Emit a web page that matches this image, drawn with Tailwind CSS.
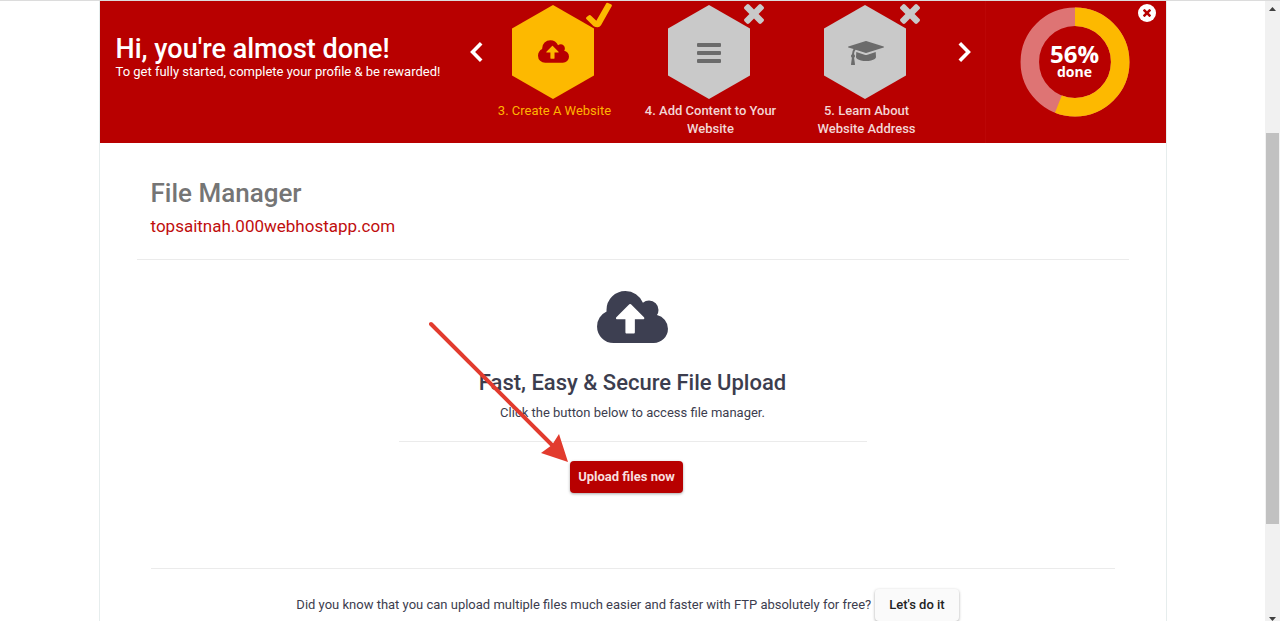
<!DOCTYPE html>
<html lang="en">
<head>
    <meta charset="UTF-8">
    <meta name="viewport" content="width=device-width, initial-scale=1.0">
    <title>File Manager</title>
    <script src="https://cdn.jsdelivr.net/npm/@tailwindcss/browser@4"></script>
</head>
<body class="bg-white font-['Roboto',sans-serif] text-[#3c3d4e]">
    <!-- shared icons -->
    <svg class="hidden" aria-hidden="true">
        <symbol id="cloud" viewBox="0 192 1920 1408">
            <path d="M1280 928q0-14-9-23l-352-352q-9-9-23-9t-23 9l-351 351q-10 12-10 24 0 14 9 23t23 9h224v352q0 13 9.500 22.500t22.500 9.500h192q13 0 22.500-9.500t9.500-22.500v-352h224q13 0 22.500-9.500t9.500-22.500zm640 288q0 159-112.500 271.500t-271.500 112.500h-1088q-185 0-316.500-131.500t-131.500-316.500q0-130 70-240t188-165q-2-30-2-43 0-212 150-362t362-150q156 0 285.500 87t188.500 231q71-62 166-62 106 0 181 75t75 181q0 76-41 138 130 31 213.500 135.500t83.500 238.500z"/>
        </symbol>
        <symbol id="times" viewBox="110 366 1188 1188">
            <path d="M1298 1322q0 40-28 68l-136 136q-28 28-68 28t-68-28l-294-294-294 294q-28 28-68 28t-68-28l-136-136q-28-28-28-68t28-68l294-294-294-294q-28-28-28-68t28-68l136-136q28-28 68-28t68 28l294 294 294-294q28-28 68-28t68 28l136 136q28 28 28 68t-28 68l-294 294 294 294q28 28 28 68z"/>
        </symbol>
        <symbol id="hexagon" viewBox="0 0 82 94">
            <path d="M41 0L82 23.500V70.500L41 94L0 70.500V23.500Z"/>
        </symbol>
    </svg>

    <div class="flex h-screen overflow-hidden border-t border-[#dcdcdc]">
        <div class="flex-1 min-w-0">
            <div class="max-w-[1068px] mx-auto min-h-screen border-x border-[#e6eded]">

                <!-- onboarding banner -->
                <header class="relative flex bg-[#b80000] text-white h-[142px]">
                    <div class="flex-1 pl-4 pt-[34px]">
                        <h1 class="text-[27px] leading-7 font-medium whitespace-nowrap">Hi, you're almost done!</h1>
                        <p class="text-[13px] leading-[18px] whitespace-nowrap">To get fully started, complete your profile &amp; be rewarded!</p>
                    </div>

                    <div class="flex items-start pt-1">
                        <button type="button" aria-label="Previous step" class="w-[18px] mt-[37px]">
                            <svg class="w-[13px] h-5" viewBox="0 0 13 20" fill="none" stroke="currentColor" stroke-width="3.600"><path d="M11.200 1.300L2.600 10L11.200 18.700"/></svg>
                        </button>
                        <ol class="flex gap-[22px] text-[13px] leading-[18px] font-medium text-center text-[#f3d5d5]">
                            <li class="w-[134px] text-[#ffb400] font-normal">
                                <div class="relative w-[82px] mx-auto -left-0.5">
                                    <svg class="w-[82px] h-[94px] fill-[#fdb900]"><use href="#hexagon"/></svg>
                                    <svg class="absolute top-[35px] left-[26px] w-[31px] h-[23px] fill-[#b80000]"><use href="#cloud"/></svg>
                                    <svg class="absolute -top-1 left-[73px] w-[27px] h-[27px] fill-[#fdb900]" viewBox="0 0 81 81"><path d="M4 54Q2 51 5 48L12 43Q15 41 19 45L34 59L63 8Q65 4 69 6L78 10Q82 12 80 16L48 73Q44 79 38 79Q31 79 26 76Z"/></svg>
                                </div>
                                <p class="mt-[3px]">3. Create A Website</p>
                            </li>
                            <li class="w-[134px]">
                                <div class="relative w-[82px] mx-auto -left-0.5">
                                    <svg class="w-[82px] h-[94px] fill-[#c9c9c9]"><use href="#hexagon"/></svg>
                                    <svg class="absolute top-[38px] left-[29px] w-6 h-5 fill-[#6b6b6b]" viewBox="0 0 24 20"><rect width="24" height="4" rx="1"/><rect y="8" width="24" height="4" rx="1"/><rect y="16" width="24" height="4" rx="1"/></svg>
                                    <svg class="absolute -top-px left-[76px] w-5 h-5 fill-[#c9c9c9]"><use href="#times"/></svg>
                                </div>
                                <p class="mt-[3px]">4. Add Content to Your Website</p>
                            </li>
                            <li class="w-[134px]">
                                <div class="relative w-[82px] mx-auto -left-0.5">
                                    <svg class="w-[82px] h-[94px] fill-[#c9c9c9]"><use href="#hexagon"/></svg>
                                    <svg class="absolute top-9 left-6 w-9 h-6 fill-[#6b6b6b]" viewBox="0 128 2304 1536"><path d="M1774 836l18 316q4 69-82 128t-235 93.500-323 34.500-323-34.500-235-93.500-82-128l18-316 574 181q22 7 48 7t48-7zm530-324q0 23-22 31l-1120 352q-4 1-10 1t-10-1l-652-206q-43 34-71 111.500t-34 178.500q63 36 63 109 0 69-58 107l58 433q2 14-8 25-9 11-24 11h-192q-15 0-24-11-10-11-8-25l58-433q-58-38-58-107 0-73 65-111 11-207 98-330l-333-104q-22-8-22-31t22-31l1120-352q4-1 10-1t10 1l1120 352q22 8 22 31z"/></svg>
                                    <svg class="absolute -top-px left-[76px] w-5 h-5 fill-[#c9c9c9]"><use href="#times"/></svg>
                                </div>
                                <p class="mt-[3px]">5. Learn About Website Address</p>
                            </li>
                        </ol>
                        <button type="button" aria-label="Next step" class="ml-6 mr-[14px] mt-[37px]">
                            <svg class="w-[13px] h-5" viewBox="0 0 13 20" fill="none" stroke="currentColor" stroke-width="3.600"><path d="M1.800 1.300L10.400 10L1.800 18.700"/></svg>
                        </button>
                    </div>

                    <div class="w-[181px] pr-0.5 pt-1.5 border-l border-[#bc0606]">
                        <div class="relative size-[110px] mx-auto">
                            <svg class="size-[110px] -rotate-90" viewBox="0 0 110 110" fill="none" stroke-width="18.500">
                                <circle cx="55" cy="55" r="45.200" stroke="#de7474"/>
                                <circle cx="55" cy="55" r="45.200" stroke="#fdb900" pathLength="100" stroke-dasharray="56 100"/>
                            </svg>
                            <p class="absolute inset-0 flex flex-col items-center justify-center font-['Open_Sans',sans-serif] font-bold">
                                <span class="text-2xl leading-5">56%</span>
                                <span class="text-sm leading-4">done</span>
                            </p>
                        </div>
                    </div>
                    <button type="button" aria-label="Close" class="absolute top-[3px] right-[10px] flex items-center justify-center size-[18px] rounded-full bg-white">
                        <svg class="size-2 fill-[#b80000]"><use href="#times"/></svg>
                    </button>
                </header>

                <main class="px-[37px]">
                    <div class="px-[14px] pt-8 pb-[18px] border-b border-[#ebebeb]">
                        <h2 class="text-[26px] leading-9 font-medium text-[#757575]">File Manager</h2>
                        <a href="#" class="block text-[17px] leading-[30px] text-[#c00d0d]">topsaitnah.000webhostapp.com</a>
                    </div>

                    <section class="relative flex flex-col items-center pt-[31px]">
                        <svg class="w-[71px] h-[52px] fill-[#3d3f51]"><use href="#cloud"/></svg>
                        <h3 class="mt-6 text-[22px] leading-8 font-medium">Fast, Easy &amp; Secure File Upload</h3>
                        <p class="mt-1 text-[13px] leading-5">Click the button below to access file manager.</p>
                        <hr class="mt-[18px] w-[468px] border-[#ebebeb]">
                        <button type="button" class="mt-[19px] mr-3 h-8 px-2 rounded-sm bg-[#b80000] text-[#f8dede] text-[13px] font-bold shadow-[0_1px_3px_rgba(0,0,0,0.35)]">Upload files now</button>

                        <svg class="absolute top-[61px] left-1/2 -ml-[204px] w-[140px] h-[142px]" viewBox="0 0 140 142" fill="#e23b2e" aria-hidden="true">
                            <path d="M2 3L126 127" stroke="#e23b2e" stroke-width="4" stroke-linecap="round"/>
                            <path d="M139 141L130 113L123 124L112 132Z"/>
                        </svg>
                    </section>

                    <footer class="mt-[75px] mx-[14px] pt-5 border-t border-[#ebebeb] flex justify-center items-center">
                        <p class="text-[13px]">Did you know that you can upload multiple files much easier and faster with FTP absolutely for free?</p>
                        <button type="button" class="ml-1 mr-2.5 h-8 px-[14px] rounded-sm bg-[#fafafa] text-[#222] text-[13px] font-medium shadow-[0_1px_3px_rgba(0,0,0,0.35)]">Let's do it</button>
                    </footer>
                </main>
            </div>
        </div>

        <!-- scrollbar -->
        <div class="w-[15px] bg-[#f1f1f1] flex flex-col items-center" aria-hidden="true">
            <svg class="mt-1.5 w-[7px] h-1 fill-[#404040]" viewBox="0 0 7 4"><path d="M0 4L3.500 0L7 4Z"/></svg>
            <div class="basis-[122px]"></div>
            <div class="w-[13px] basis-[391px] bg-[#c1c1c1]"></div>
            <svg class="mt-auto w-[7px] h-1 shrink-0 fill-[#404040]" viewBox="0 0 7 4"><path d="M0 0L3.500 4L7 0Z"/></svg>
        </div>
    </div>
</body>
</html>
